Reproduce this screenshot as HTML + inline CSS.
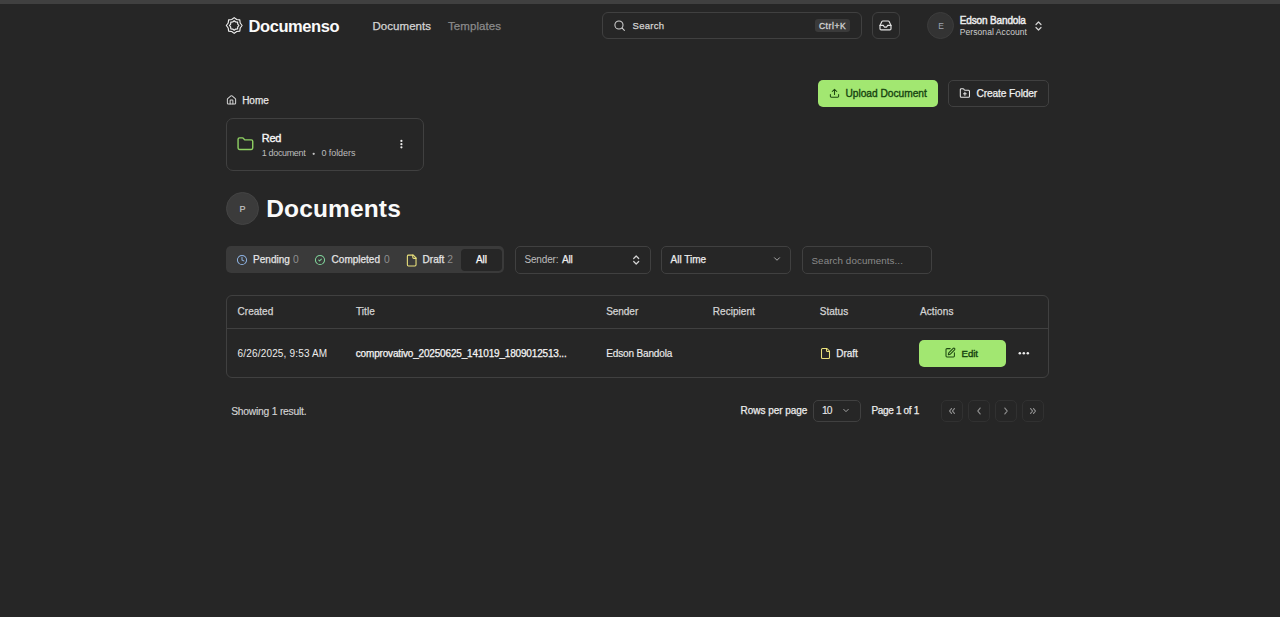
<!DOCTYPE html><html><head><meta charset="utf-8"><style>
html,body{margin:0;padding:0;background:#262626;width:1280px;height:617px;overflow:hidden;font-family:"Liberation Sans",sans-serif}
.t{position:absolute;white-space:nowrap;line-height:1}
.r{position:absolute}
</style></head><body>
<div class="r" style="left:0px;top:0px;width:1280px;height:4px;background:#404040"></div>
<svg class="r" style="left:224px;top:15px;overflow:visible;" width="20" height="21" viewBox="0.000 0.000 20.000 21.000" preserveAspectRatio="none" fill="none"><path d="M10.20 2.60 L12.69 4.49 L15.79 4.91 L16.21 8.01 L18.10 10.50 L16.21 12.99 L15.79 16.09 L12.69 16.51 L10.20 18.40 L7.71 16.51 L4.61 16.09 L4.19 12.99 L2.30 10.50 L4.19 8.01 L4.61 4.91 L7.71 4.49Z" stroke="#f0f0f0" stroke-width="1.15" stroke-linejoin="round"/><path d="M10.20 5.75 L11.67 6.94 L13.56 7.14 L13.76 9.03 L14.95 10.50 L13.76 11.97 L13.56 13.86 L11.67 14.06 L10.20 15.25 L8.73 14.06 L6.84 13.86 L6.64 11.97 L5.45 10.50 L6.64 9.03 L6.84 7.14 L8.73 6.94Z" stroke="#f0f0f0" stroke-width="1.15" stroke-linejoin="round"/></svg>
<div class="t" style="left:248.60px;top:18.00px;font-size:16.5px;font-weight:700;letter-spacing:-0.436px;color:#fafafa;">Documenso</div>
<div class="t" style="left:372.50px;top:21.00px;font-size:11.5px;font-weight:400;letter-spacing:0.040px;color:#d4d4d4;-webkit-text-stroke:0.25px #d4d4d4;">Documents</div>
<div class="t" style="left:448.00px;top:21.00px;font-size:11.5px;font-weight:400;letter-spacing:0.068px;color:#8a8a8a;-webkit-text-stroke:0.25px #8a8a8a;">Templates</div>
<div class="r" style="left:602px;top:12px;width:260px;height:27px;border:1px solid #404040;border-radius:6px;box-sizing:border-box"></div>
<svg class="r" style="left:613px;top:19px;overflow:visible;" width="13" height="13" viewBox="0.000 0.000 24.000 24.000" preserveAspectRatio="none" fill="none"><circle cx="11" cy="11" r="7.5" stroke="#d4d4d4" stroke-width="1.9"/><path d="M21 21l-4.5-4.5" stroke="#d4d4d4" stroke-width="1.9" stroke-linecap="round"/></svg>
<div class="t" style="left:632.60px;top:21.00px;font-size:9.5px;font-weight:400;letter-spacing:0.251px;color:#d4d4d4;-webkit-text-stroke:0.25px #d4d4d4;">Search</div>
<div class="r" style="left:815px;top:19px;width:35px;height:13px;background:#3a3a3a;border-radius:3px"></div>
<div class="t" style="left:818.90px;top:22.00px;font-size:8.5px;font-weight:400;letter-spacing:0.590px;color:#d0d0d0;-webkit-text-stroke:0.35px #d0d0d0;">Ctrl+K</div>
<div class="r" style="left:872px;top:12px;width:28px;height:27px;border:1px solid #404040;border-radius:6px;box-sizing:border-box"></div>
<svg class="r" style="left:878px;top:18px;overflow:visible;" width="15" height="14" viewBox="-1.636 -1.455 27.273 25.455" preserveAspectRatio="none" fill="none"><path d="M22 12h-6l-2 3h-4l-2-3H2" stroke="#e5e5e5" stroke-width="2.1" stroke-linecap="round" stroke-linejoin="round"/><path d="M5.45 5.11L2 12v6a2 2 0 0 0 2 2h16a2 2 0 0 0 2-2v-6l-3.45-6.89A2 2 0 0 0 16.76 4H7.24a2 2 0 0 0-1.79 1.11z" stroke="#e5e5e5" stroke-width="2.1" stroke-linecap="round" stroke-linejoin="round"/></svg>
<div class="r" style="left:927px;top:12px;width:27px;height:27px;background:#333;border:1px solid #3d3d3d;border-radius:50%;box-sizing:border-box"></div>
<div class="t" style="left:938.30px;top:22.00px;font-size:8.5px;font-weight:400;letter-spacing:-1.072px;color:#9ca3af;">E</div>
<div class="t" style="left:959.80px;top:16.00px;font-size:10px;font-weight:400;letter-spacing:-0.142px;color:#ececec;-webkit-text-stroke:0.45px #ececec;">Edson Bandola</div>
<div class="t" style="left:959.80px;top:28.00px;font-size:8.5px;font-weight:400;letter-spacing:0.069px;color:#cfcfcf;">Personal Account</div>
<svg class="r" style="left:1034px;top:21px;overflow:visible;" width="9" height="10" viewBox="0.000 0.000 9.000 10.000" preserveAspectRatio="none" fill="none"><path d="M2 6.5L4.5 9 7 6.5M2 3.5L4.5 1 7 3.5" stroke="#d4d4d4" stroke-width="1.2" stroke-linecap="round" stroke-linejoin="round"/></svg>
<svg class="r" style="left:226px;top:94px;overflow:visible;" width="11" height="12" viewBox="0.000 -1.811 24.000 27.170" preserveAspectRatio="none" fill="none"><path d="M15 21v-8a1 1 0 0 0-1-1h-4a1 1 0 0 0-1 1v8" stroke="#d4d4d4" stroke-width="2.2" stroke-linecap="round" stroke-linejoin="round"/><path d="M3 10a2 2 0 0 1 .709-1.528l7-5.999a2 2 0 0 1 2.582 0l7 5.999A2 2 0 0 1 21 10v9a2 2 0 0 1-2 2H5a2 2 0 0 1-2-2z" stroke="#d4d4d4" stroke-width="2.2" stroke-linecap="round" stroke-linejoin="round"/></svg>
<div class="t" style="left:242.20px;top:96.00px;font-size:10px;font-weight:400;letter-spacing:-0.043px;color:#e5e5e5;-webkit-text-stroke:0.25px #e5e5e5;">Home</div>
<div class="r" style="left:818px;top:80px;width:120px;height:27px;background:#a2e771;border-radius:5px"></div>
<svg class="r" style="left:829px;top:88px;overflow:visible;" width="11" height="11" viewBox="0.000 0.000 24.000 25.143" preserveAspectRatio="none" fill="none"><path d="M21 15v4a2 2 0 0 1-2 2H5a2 2 0 0 1-2-2v-4" stroke="#1f4a12" stroke-width="2.3" stroke-linecap="round" stroke-linejoin="round"/><path d="M17 8l-5-5-5 5M12 3v12" stroke="#1f4a12" stroke-width="2.3" stroke-linecap="round" stroke-linejoin="round"/></svg>
<div class="t" style="left:845.50px;top:89.00px;font-size:10.2px;font-weight:400;letter-spacing:-0.020px;color:#174410;-webkit-text-stroke:0.35px #174410;">Upload Document</div>
<div class="r" style="left:948px;top:80px;width:101px;height:27px;border:1px solid #404040;border-radius:5px;box-sizing:border-box"></div>
<svg class="r" style="left:959px;top:87px;overflow:visible;" width="12" height="13" viewBox="-0.873 -0.400 26.182 26.000" preserveAspectRatio="none" fill="none"><path d="M12 10v6M9 13h6" stroke="#e5e5e5" stroke-width="2.3" stroke-linecap="round"/><path d="M20 20a2 2 0 0 0 2-2V8a2 2 0 0 0-2-2h-7.9a2 2 0 0 1-1.69-.9L9.6 3.9A2 2 0 0 0 7.93 3H4a2 2 0 0 0-2 2v13a2 2 0 0 0 2 2Z" stroke="#e5e5e5" stroke-width="2.3" stroke-linecap="round" stroke-linejoin="round"/></svg>
<div class="t" style="left:976.60px;top:89.00px;font-size:10.2px;font-weight:400;letter-spacing:-0.139px;color:#f0f0f0;-webkit-text-stroke:0.25px #f0f0f0;">Create Folder</div>
<div class="r" style="left:226px;top:118px;width:198px;height:53px;border:1px solid #404040;border-radius:7px;box-sizing:border-box"></div>
<svg class="r" style="left:236px;top:135px;overflow:visible;overflow:visible" width="19" height="18" viewBox="-0.818 -1.325 25.909 26.503" preserveAspectRatio="none" fill="none"><path d="M20 20a2 2 0 0 0 2-2V8a2 2 0 0 0-2-2h-7.9a2 2 0 0 1-1.69-.9L9.6 3.9A2 2 0 0 0 7.93 3H4a2 2 0 0 0-2 2v13a2 2 0 0 0 2 2Z" stroke="#8fd163" stroke-width="1.9" stroke-linecap="round" stroke-linejoin="round"/></svg>
<div class="t" style="left:261.80px;top:133.00px;font-size:11px;font-weight:400;letter-spacing:-0.263px;color:#f5f5f5;-webkit-text-stroke:0.4px #f5f5f5;">Red</div>
<div class="t" style="left:261.80px;top:149.00px;font-size:9px;font-weight:400;letter-spacing:-0.350px;color:#bdbdbd;">1 document</div>
<svg class="r" style="left:310px;top:150px;overflow:visible;" width="8" height="8" viewBox="0.000 0.000 8.000 8.000" preserveAspectRatio="none" fill="none"><circle cx="3.7" cy="3.8" r="1.15" fill="#c4c4c4"/></svg>
<div class="t" style="left:321.40px;top:149.00px;font-size:9px;font-weight:400;letter-spacing:-0.056px;color:#bdbdbd;">0 folders</div>
<svg class="r" style="left:396px;top:136px;overflow:visible;" width="10" height="16" viewBox="0.000 0.000 10.000 16.000" preserveAspectRatio="none" fill="none"><circle cx="5.4" cy="4.9" r="1.1" fill="#ececec"/><circle cx="5.4" cy="8.2" r="1.1" fill="#ececec"/><circle cx="5.4" cy="11.3" r="1.1" fill="#ececec"/></svg>
<div class="r" style="left:226px;top:192px;width:33px;height:33px;background:#3b3b3b;border:1px solid #444;border-radius:50%;box-sizing:border-box"></div>
<div class="t" style="left:239.50px;top:205.00px;font-size:9px;font-weight:400;letter-spacing:-0.500px;color:#c4c4c4;-webkit-text-stroke:0.2px #c4c4c4;">P</div>
<div class="t" style="left:266.30px;top:197.00px;font-size:24.5px;font-weight:700;letter-spacing:0.133px;color:#fafafa;">Documents</div>
<div class="r" style="left:226px;top:246px;width:278px;height:27px;background:#3a3a3a;border-radius:5px"></div>
<div class="r" style="left:461px;top:249px;width:41px;height:21.5px;background:#262626;border-radius:4px"></div>
<svg class="r" style="left:236px;top:254px;overflow:visible;" width="12" height="12" viewBox="-1.091 -1.091 26.182 26.182" preserveAspectRatio="none" fill="none"><circle cx="12" cy="12" r="10" stroke="#8db2e2" stroke-width="2.2"/><path d="M12 6v6l4 2" stroke="#8db2e2" stroke-width="2.2" stroke-linecap="round" stroke-linejoin="round"/></svg>
<div class="t" style="left:253.00px;top:255.00px;font-size:10px;font-weight:400;letter-spacing:0.028px;color:#e5e5e5;-webkit-text-stroke:0.25px #e5e5e5;">Pending</div>
<div class="t" style="left:292.90px;top:255.00px;font-size:10.3px;font-weight:400;letter-spacing:-0.334px;color:#8f8f8f;">0</div>
<svg class="r" style="left:314px;top:254px;overflow:visible;" width="12" height="12" viewBox="-1.091 -1.091 26.182 26.182" preserveAspectRatio="none" fill="none"><circle cx="12" cy="12" r="10" stroke="#80d49b" stroke-width="2.2"/><path d="M9 12l2 2 4-4" stroke="#80d49b" stroke-width="2.2" stroke-linecap="round" stroke-linejoin="round"/></svg>
<div class="t" style="left:331.60px;top:255.00px;font-size:10px;font-weight:400;letter-spacing:0.005px;color:#e5e5e5;-webkit-text-stroke:0.25px #e5e5e5;">Completed</div>
<div class="t" style="left:383.90px;top:255.00px;font-size:10.3px;font-weight:400;letter-spacing:-0.334px;color:#8f8f8f;">0</div>
<svg class="r" style="left:405px;top:254px;overflow:visible;" width="14" height="13" viewBox="-0.369 0.000 25.846 24.000" preserveAspectRatio="none" fill="none"><path d="M15 2H6a2 2 0 0 0-2 2v16a2 2 0 0 0 2 2h12a2 2 0 0 0 2-2V7Z" stroke="#ebe27c" stroke-width="2" stroke-linecap="round" stroke-linejoin="round"/><path d="M14 2v4a2 2 0 0 0 2 2h4" stroke="#ebe27c" stroke-width="2" stroke-linecap="round" stroke-linejoin="round"/></svg>
<div class="t" style="left:422.50px;top:255.00px;font-size:10px;font-weight:400;letter-spacing:0.046px;color:#e5e5e5;-webkit-text-stroke:0.25px #e5e5e5;">Draft</div>
<div class="t" style="left:447.20px;top:255.00px;font-size:10.3px;font-weight:400;letter-spacing:-0.334px;color:#8f8f8f;">2</div>
<div class="t" style="left:476.00px;top:255.00px;font-size:10px;font-weight:400;letter-spacing:-0.070px;color:#fafafa;-webkit-text-stroke:0.25px #fafafa;">All</div>
<div class="r" style="left:515px;top:246px;width:136px;height:27.5px;border:1px solid #404040;border-radius:5px;box-sizing:border-box"></div>
<div class="t" style="left:524.40px;top:255.00px;font-size:10px;font-weight:400;letter-spacing:-0.147px;color:#bdbdbd;">Sender:</div>
<div class="t" style="left:561.90px;top:255.00px;font-size:10px;font-weight:400;letter-spacing:-0.170px;color:#ececec;-webkit-text-stroke:0.25px #ececec;">All</div>
<svg class="r" style="left:631px;top:255px;overflow:visible;" width="10" height="10" viewBox="-0.700 0.000 10.000 10.000" preserveAspectRatio="none" fill="none"><path d="M2 6.5L4.5 9 7 6.5M2 3.5L4.5 1 7 3.5" stroke="#d4d4d4" stroke-width="1.2" stroke-linecap="round" stroke-linejoin="round"/></svg>
<div class="r" style="left:661px;top:246px;width:130px;height:27.5px;border:1px solid #404040;border-radius:5px;box-sizing:border-box"></div>
<div class="t" style="left:670.60px;top:255.00px;font-size:10px;font-weight:400;letter-spacing:-0.018px;color:#ececec;-webkit-text-stroke:0.25px #ececec;">All Time</div>
<svg class="r" style="left:772px;top:254px;overflow:visible;" width="10" height="10" viewBox="0.000 0.000 24.000 24.000" preserveAspectRatio="none" fill="none"><path d="M6 9l6 6 6-6" stroke="#bdbdbd" stroke-width="2.1" stroke-linecap="round" stroke-linejoin="round"/></svg>
<div class="r" style="left:802px;top:246px;width:130px;height:27.5px;border:1px solid #404040;border-radius:5px;box-sizing:border-box"></div>
<div class="t" style="left:811.50px;top:256.00px;font-size:9.8px;font-weight:400;letter-spacing:0.085px;color:#8a8a8a;">Search documents...</div>
<div class="r" style="left:226px;top:295px;width:823px;height:83px;border:1px solid #404040;border-radius:6px;box-sizing:border-box"></div>
<div class="r" style="left:227px;top:328px;width:821px;height:1px;background:#404040"></div>
<div class="t" style="left:237.60px;top:307.00px;font-size:10px;font-weight:400;letter-spacing:0.010px;color:#d4d4d4;-webkit-text-stroke:0.25px #d4d4d4;">Created</div>
<div class="t" style="left:356.00px;top:307.00px;font-size:10px;font-weight:400;letter-spacing:0.047px;color:#d4d4d4;-webkit-text-stroke:0.25px #d4d4d4;">Title</div>
<div class="t" style="left:606.20px;top:307.00px;font-size:10px;font-weight:400;letter-spacing:-0.042px;color:#d4d4d4;-webkit-text-stroke:0.25px #d4d4d4;">Sender</div>
<div class="t" style="left:712.80px;top:307.00px;font-size:10px;font-weight:400;letter-spacing:0.035px;color:#d4d4d4;-webkit-text-stroke:0.25px #d4d4d4;">Recipient</div>
<div class="t" style="left:819.70px;top:307.00px;font-size:10px;font-weight:400;letter-spacing:0.023px;color:#d4d4d4;-webkit-text-stroke:0.25px #d4d4d4;">Status</div>
<div class="t" style="left:920.00px;top:307.00px;font-size:10px;font-weight:400;letter-spacing:0.100px;color:#d4d4d4;-webkit-text-stroke:0.25px #d4d4d4;">Actions</div>
<div class="t" style="left:237.60px;top:349.00px;font-size:10px;font-weight:400;letter-spacing:0.169px;color:#ececec;">6/26/2025, 9:53 AM</div>
<div class="t" style="left:355.75px;top:349.00px;font-size:10px;font-weight:400;letter-spacing:-0.171px;color:#f5f5f5;-webkit-text-stroke:0.25px #f5f5f5;">comprovativo_20250625_141019_1809012513...</div>
<div class="t" style="left:606.20px;top:349.00px;font-size:10px;font-weight:400;letter-spacing:-0.142px;color:#ececec;-webkit-text-stroke:0.15px #ececec;">Edson Bandola</div>
<svg class="r" style="left:819px;top:347px;overflow:visible;" width="12" height="12" viewBox="-1.000 -1.000 24.000 24.000" preserveAspectRatio="none" fill="none"><path d="M15 2H6a2 2 0 0 0-2 2v16a2 2 0 0 0 2 2h12a2 2 0 0 0 2-2V7Z" stroke="#ebe27c" stroke-width="2.1" stroke-linecap="round" stroke-linejoin="round"/><path d="M14 2v4a2 2 0 0 0 2 2h4" stroke="#ebe27c" stroke-width="2.1" stroke-linecap="round" stroke-linejoin="round"/></svg>
<div class="t" style="left:836.20px;top:349.00px;font-size:10px;font-weight:400;letter-spacing:0.006px;color:#ececec;-webkit-text-stroke:0.25px #ececec;">Draft</div>
<div class="r" style="left:919px;top:340px;width:87px;height:27px;background:#a2e771;border-radius:5px"></div>
<svg class="r" style="left:944px;top:347px;overflow:visible;" width="12" height="12" viewBox="-1.286 -0.429 25.714 25.714" preserveAspectRatio="none" fill="none"><path d="M12 3H5a2 2 0 0 0-2 2v14a2 2 0 0 0 2 2h14a2 2 0 0 0 2-2v-7" stroke="#1f4a12" stroke-width="2.3" stroke-linecap="round" stroke-linejoin="round"/><path d="M18.375 2.625a1 1 0 0 1 3 3l-9.013 9.014a2 2 0 0 1-.853.505l-2.873.84a.5.5 0 0 1-.62-.62l.84-2.873a2 2 0 0 1 .506-.852z" stroke="#1f4a12" stroke-width="2.3" stroke-linecap="round" stroke-linejoin="round"/></svg>
<div class="t" style="left:961.60px;top:349.00px;font-size:9.6px;font-weight:400;letter-spacing:-0.083px;color:#174410;-webkit-text-stroke:0.4px #174410;">Edit</div>
<svg class="r" style="left:1016px;top:348px;overflow:visible;" width="16" height="10" viewBox="0.000 0.000 16.000 10.000" preserveAspectRatio="none" fill="none"><circle cx="3.8" cy="5.3" r="1.25" fill="#ececec"/><circle cx="7.8" cy="5.3" r="1.25" fill="#ececec"/><circle cx="11.8" cy="5.3" r="1.25" fill="#ececec"/></svg>
<div class="t" style="left:231.20px;top:407.00px;font-size:10.3px;font-weight:400;letter-spacing:-0.225px;color:#d4d4d4;-webkit-text-stroke:0.15px #d4d4d4;">Showing 1 result.</div>
<div class="t" style="left:740.60px;top:406.00px;font-size:10px;font-weight:400;letter-spacing:-0.044px;color:#ececec;-webkit-text-stroke:0.25px #ececec;">Rows per page</div>
<div class="r" style="left:813px;top:400px;width:47.5px;height:21.5px;border:1px solid #404040;border-radius:5px;box-sizing:border-box"></div>
<div class="t" style="left:821.90px;top:406.00px;font-size:10.3px;font-weight:400;letter-spacing:-0.934px;color:#ececec;-webkit-text-stroke:0.1px #ececec;">10</div>
<svg class="r" style="left:841px;top:406px;overflow:visible;" width="10" height="9" viewBox="-1.333 0.000 26.667 24.000" preserveAspectRatio="none" fill="none"><path d="M6 9l6 6 6-6" stroke="#bdbdbd" stroke-width="2.2" stroke-linecap="round" stroke-linejoin="round"/></svg>
<div class="t" style="left:871.40px;top:406.00px;font-size:10px;font-weight:400;letter-spacing:-0.325px;color:#ececec;-webkit-text-stroke:0.25px #ececec;">Page 1 of 1</div>
<div class="r" style="left:941px;top:400px;width:22px;height:22px;border:1px solid #313131;border-radius:5px;box-sizing:border-box"></div>
<svg class="r" style="left:947px;top:405px;overflow:visible;" width="10" height="12" viewBox="0.000 0.000 24.000 24.000" preserveAspectRatio="none" fill="none"><path d="M11 17l-5-5 5-5M18 17l-5-5 5-5" stroke="#8f8f8f" stroke-width="2.2" stroke-linecap="round" stroke-linejoin="round"/></svg>
<div class="r" style="left:968px;top:400px;width:22px;height:22px;border:1px solid #313131;border-radius:5px;box-sizing:border-box"></div>
<svg class="r" style="left:974px;top:405px;overflow:visible;" width="10" height="12" viewBox="0.000 0.000 24.000 24.000" preserveAspectRatio="none" fill="none"><path d="M15 18l-6-6 6-6" stroke="#8f8f8f" stroke-width="2.2" stroke-linecap="round" stroke-linejoin="round"/></svg>
<div class="r" style="left:995px;top:400px;width:22px;height:22px;border:1px solid #313131;border-radius:5px;box-sizing:border-box"></div>
<svg class="r" style="left:1001px;top:405px;overflow:visible;" width="10" height="12" viewBox="0.000 0.000 24.000 24.000" preserveAspectRatio="none" fill="none"><path d="M9 18l6-6-6-6" stroke="#8f8f8f" stroke-width="2.2" stroke-linecap="round" stroke-linejoin="round"/></svg>
<div class="r" style="left:1022px;top:400px;width:22px;height:22px;border:1px solid #313131;border-radius:5px;box-sizing:border-box"></div>
<svg class="r" style="left:1028px;top:405px;overflow:visible;" width="10" height="12" viewBox="0.000 0.000 24.000 24.000" preserveAspectRatio="none" fill="none"><path d="M6 17l5-5-5-5M13 17l5-5-5-5" stroke="#8f8f8f" stroke-width="2.2" stroke-linecap="round" stroke-linejoin="round"/></svg>
</body></html>
